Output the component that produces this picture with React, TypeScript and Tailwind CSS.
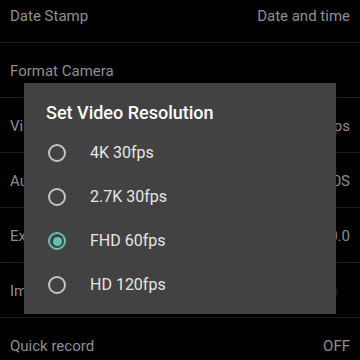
import { useState } from 'react';

// ─── Types ────────────────────────────────────────────────────────────────────

type Row = { label: string; value?: string; toggle?: boolean };

const rows: Row[] = [
  { label: 'Date Stamp', value: 'Date and time' },
  { label: 'Format Camera' },
  { label: 'Video Resolution', value: 'FHD 60fps' },
  { label: 'Auto Power Off', value: '60S' },
  { label: 'Exposure', value: '0.0' },
  { label: 'Image Flip', toggle: true },
  { label: 'Quick record', value: 'OFF' },
];

const options = ['4K 30fps', '2.7K 30fps', 'FHD 60fps', 'HD 120fps'];

// ─── Settings Row ─────────────────────────────────────────────────────────────

function SettingsRow({ row }: { row: Row }) {
  return (
    <div className="h-[55px] flex items-center justify-between pl-[10px] pr-[10px] pt-[3px] border-b border-[#1c1c1c] text-[15px] text-[#8f8f8f]">
      <span>{row.label}</span>
      {row.value && <span>{row.value}</span>}
      {row.toggle && (
        <div className="w-[30px] h-[14px] mr-[12px] rounded-full bg-[#161616] relative">
          <div className="absolute -left-[2px] -top-[3px] w-[20px] h-[20px] rounded-full bg-[#1f1f1f]" />
        </div>
      )}
    </div>
  );
}

// ─── Radio ────────────────────────────────────────────────────────────────────

function Radio({ checked }: { checked: boolean }) {
  return (
    <div className={`w-[18px] h-[18px] rounded-full border-2 flex items-center justify-center shrink-0 ${checked ? 'border-[#63c3b3]' : 'border-[#c4c4c4]'}`}>
      {checked && <div className="w-[9px] h-[9px] rounded-full bg-[#63c3b3]" />}
    </div>
  );
}

// ─── Main ─────────────────────────────────────────────────────────────────────

export default function App() {
  const [selected, setSelected] = useState(2);

  return (
    <div className="relative w-[360px] h-[360px] overflow-hidden bg-black" style={{ fontFamily: 'Roboto, "Noto Sans", sans-serif' }}>
      <div className="-mt-[12px]">
        {rows.map((r) => <SettingsRow key={r.label} row={r} />)}
      </div>

      <div className="absolute left-[24px] top-[83px] w-[312px] h-[231px] bg-[#424242] px-[24px] shadow-lg">
        <h2 className="pt-[20px] mb-[8px] -ml-[2px] text-[18px] leading-[20px] font-medium text-white">Set Video Resolution</h2>
        {options.map((o, i) => (
          <button key={o} onClick={() => setSelected(i)} className="h-[44px] w-full flex items-center gap-[24px] text-left">
            <Radio checked={selected === i} />
            <span className="text-[16px] text-[#e6e6e6]">{o}</span>
          </button>
        ))}
      </div>
    </div>
  );
}
